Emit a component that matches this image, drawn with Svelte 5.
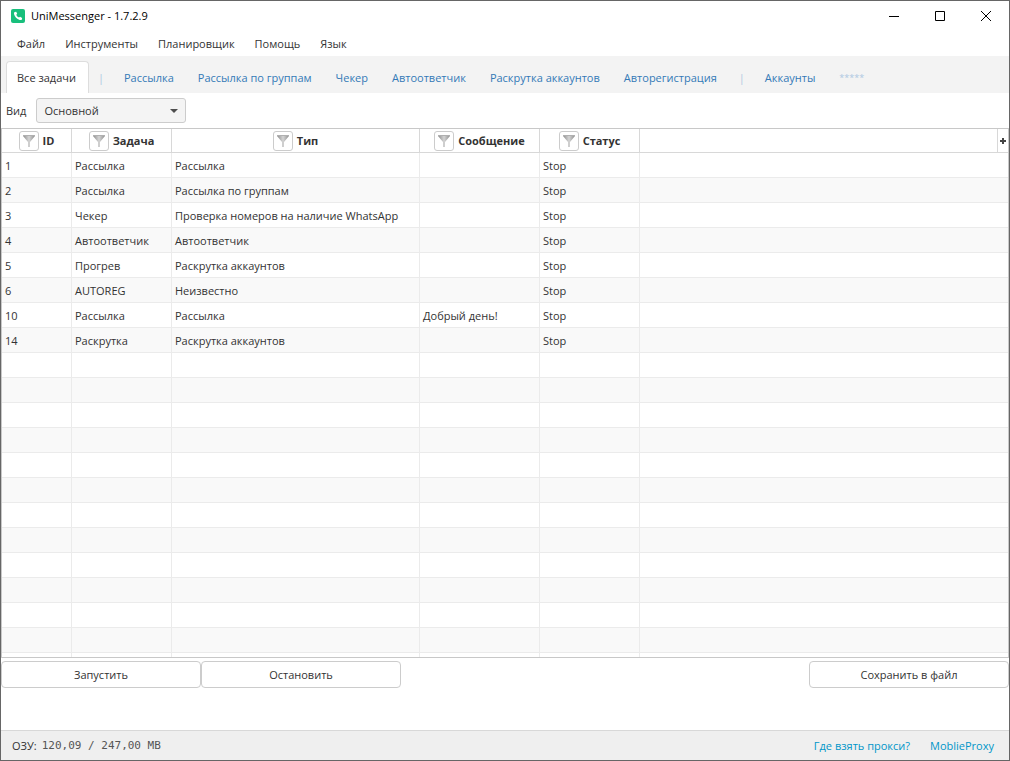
<script lang="ts">
  type Task = { id: number; name: string; type: string; message: string; status: string };

  const menu = ['Файл', 'Инструменты', 'Планировщик', 'Помощь', 'Язык'];

  const tabs = [
    'Все задачи',
    '|',
    'Рассылка',
    'Рассылка по группам',
    'Чекер',
    'Автоответчик',
    'Раскрутка аккаунтов',
    'Авторегистрация',
    '|',
    'Аккаунты',
    '*****',
  ];

  const columns = ['ID', 'Задача', 'Тип', 'Сообщение', 'Статус'];

  const tasks: Task[] = [
    { id: 1, name: 'Рассылка', type: 'Рассылка', message: '', status: 'Stop' },
    { id: 2, name: 'Рассылка', type: 'Рассылка по группам', message: '', status: 'Stop' },
    { id: 3, name: 'Чекер', type: 'Проверка номеров на наличие WhatsApp', message: '', status: 'Stop' },
    { id: 4, name: 'Автоответчик', type: 'Автоответчик', message: '', status: 'Stop' },
    { id: 5, name: 'Прогрев', type: 'Раскрутка аккаунтов', message: '', status: 'Stop' },
    { id: 6, name: 'AUTOREG', type: 'Неизвестно', message: '', status: 'Stop' },
    { id: 10, name: 'Рассылка', type: 'Рассылка', message: 'Добрый день!', status: 'Stop' },
    { id: 14, name: 'Раскрутка', type: 'Раскрутка аккаунтов', message: '', status: 'Stop' },
  ];

  let activeTab = 0;
  let view = 'Основной';
  let tableHeight = 0;

  // empty rows fill the rest of the table area
  $: emptyRows = Math.max(0, Math.ceil((tableHeight - 25) / 25) - tasks.length);
</script>

<div class="window">
  <header class="titlebar">
    <svg class="logo" width="14" height="14" viewBox="0 0 14 14">
      <rect width="14" height="14" rx="2" fill="#18bf7c" />
      <path
        d="M3.800 3 5.200 2.800 6.200 4.800 5.300 5.800C5.800 7.100 6.700 8 8 8.600L9.100 7.800 11.100 8.900 11 10.200C10.500 11 9.700 11.200 8.700 10.900C5.800 10 3.800 7.900 3 5C2.900 4.100 3.100 3.400 3.800 3Z"
        fill="#fff"
      />
    </svg>
    <h1>UniMessenger - 1.7.2.9</h1>
    <div class="window-buttons">
      <button type="button" aria-label="Свернуть">
        <svg width="10" height="10" viewBox="0 0 10 10"><path d="M0 5.500H10" /></svg>
      </button>
      <button type="button" aria-label="Развернуть">
        <svg width="10" height="10" viewBox="0 0 10 10"><path d="M.5.5H9.500V9.500H.5Z" /></svg>
      </button>
      <button type="button" aria-label="Закрыть">
        <svg width="10" height="10" viewBox="0 0 10 10"><path d="M0 0 10 10M10 0 0 10" /></svg>
      </button>
    </div>
  </header>

  <nav class="menu">
    {#each menu as item}
      <button type="button">{item}</button>
    {/each}
  </nav>

  <div class="tabs" role="tablist">
    {#each tabs as tab, index}
      <button
        type="button"
        role="tab"
        class="tab"
        class:active={index === activeTab}
        class:divider={tab === '|'}
        class:muted={tab === '*****'}
        aria-selected={index === activeTab}
        disabled={tab === '|' || tab === '*****'}
        on:click={() => (activeTab = index)}
      >
        {tab}
      </button>
    {/each}
  </div>

  <div class="toolbar">
    <label for="view">Вид</label>
    <div class="select">
      <select id="view" bind:value={view}>
        <option>Основной</option>
      </select>
      <svg width="8" height="4" viewBox="0 0 8 4"><path d="M0 0H8L4 4Z" fill="#4d4d4d" /></svg>
    </div>
  </div>

  <div class="table-area" bind:clientHeight={tableHeight}>
    <table>
      <colgroup>
        <col class="col-id" />
        <col class="col-name" />
        <col class="col-type" />
        <col class="col-message" />
        <col class="col-status" />
        <col />
        <col class="col-add" />
      </colgroup>
      <thead>
        <tr>
          {#each columns as column, index}
            <th>
              <div class="head">
                <button type="button" class="filter" aria-label="Фильтр: {column}">
                  <svg width="14" height="14" viewBox="0 0 14 14">
                    <defs>
                      <linearGradient id="funnel-{index}">
                        <stop offset="0" stop-color="#8c8c8c" />
                        <stop offset="0.5" stop-color="#d4d4d4" />
                        <stop offset="1" stop-color="#909090" />
                      </linearGradient>
                    </defs>
                    <path d="M1 1H13V2L8 8V13H6V8L1 2Z" fill="url(#funnel-{index})" />
                    <path d="M1 1.500H13" stroke="#b0b0b0" />
                  </svg>
                </button>
                {column}
              </div>
            </th>
          {/each}
          <th></th>
          <th class="add">
            <button type="button" aria-label="Столбцы">
              <svg width="6" height="6" viewBox="0 0 6 6"><path d="M3 0V6M0 3H6" stroke="#444" stroke-width="2" /></svg>
            </button>
          </th>
        </tr>
      </thead>
      <tbody>
        {#each tasks as task}
          <tr>
            <td>{task.id}</td>
            <td>{task.name}</td>
            <td>{task.type}</td>
            <td>{task.message}</td>
            <td>{task.status}</td>
            <td colspan="2"></td>
          </tr>
        {/each}
        {#each Array(emptyRows) as _}
          <tr>
            <td></td>
            <td></td>
            <td></td>
            <td></td>
            <td></td>
            <td colspan="2"></td>
          </tr>
        {/each}
      </tbody>
    </table>
  </div>

  <div class="actions">
    <button type="button">Запустить</button>
    <button type="button">Остановить</button>
    <button type="button" class="save">Сохранить в файл</button>
  </div>

  <footer>
    <span>ОЗУ:</span>
    <span class="memory">120,09 / 247,00 MB</span>
    <div class="links">
      <a href="#proxy">Где взять прокси?</a>
      <a href="#mobile-proxy">MoblieProxy</a>
    </div>
  </footer>
</div>

<style>
  .window {
    display: flex;
    flex-direction: column;
    box-sizing: border-box;
    height: 100vh;
    border: 1px solid #666;
    background: #fff;
    color: #333;
    font-family: 'Open Sans', 'Noto Sans', sans-serif;
    font-size: 11px;
    line-height: 16px;
  }

  button,
  select {
    margin: 0;
    padding: 0;
    border: none;
    background: none;
    color: inherit;
    font: inherit;
  }

  .titlebar {
    display: flex;
    align-items: center;
    height: 29px;
    padding-left: 10px;
    color: #000;
  }

  h1 {
    margin: 0 0 0 6px;
    font-size: 11px;
    font-weight: normal;
  }

  .window-buttons {
    display: flex;
    margin-left: auto;
  }

  .window-buttons button {
    display: flex;
    align-items: center;
    justify-content: center;
    width: 46px;
    height: 29px;
  }

  .window-buttons path {
    fill: none;
    stroke: #000;
  }

  .menu {
    display: flex;
    gap: 20px;
    height: 26px;
    padding-left: 16px;
  }

  .menu button {
    padding-top: 2px;
  }

  .tabs {
    display: flex;
    height: 32px;
    padding: 5px 5px 0;
    background: #f3f3f3;
  }

  .tab {
    padding: 0 12px 0 10px;
    border: 1px solid transparent;
    border-bottom: none;
    border-radius: 4px 4px 0 0;
    color: #337ab7;
    white-space: nowrap;
  }

  .tab.active {
    border-color: #ddd;
    background: #fff;
    color: #333;
  }

  .tab.divider,
  .tab.muted {
    color: #adc8e2;
  }

  .tab.divider {
    padding: 0 8px;
  }

  .tab.muted {
    font-size: 9px;
  }

  .toolbar {
    display: flex;
    align-items: center;
    gap: 10px;
    height: 35px;
    padding-left: 5px;
  }

  .select {
    position: relative;
  }

  select {
    display: block;
    box-sizing: border-box;
    width: 150px;
    height: 25px;
    padding: 0 24px 0 7px;
    border: 1px solid #ccc;
    border-radius: 3px;
    background: #f4f4f4;
    appearance: none;
  }

  .select svg {
    position: absolute;
    top: 11px;
    right: 8px;
    pointer-events: none;
  }

  .table-area {
    flex: 1;
    min-height: 0;
    overflow: hidden;
    border: 1px solid #c8c8c8;
  }

  table {
    width: 100%;
    border-collapse: separate;
    border-spacing: 0;
    table-layout: fixed;
  }

  .col-id {
    width: 70px;
  }

  .col-name,
  .col-status {
    width: 100px;
  }

  .col-type {
    width: 248px;
  }

  .col-message {
    width: 120px;
  }

  .col-add {
    width: 10px;
  }

  th,
  td {
    box-sizing: border-box;
    padding: 2px 0 0 3px;
    border-right: 1px solid #ebebeb;
    border-bottom: 1px solid #ebebeb;
    text-align: left;
    white-space: nowrap;
  }

  th {
    height: 24px;
    padding: 0;
    border-color: #d8d8d8;
  }

  td {
    height: 25px;
  }

  th:last-child,
  td:last-child {
    border-right: none;
  }

  tbody tr:nth-child(even) {
    background: #f9f9f9;
  }

  .head {
    display: flex;
    align-items: center;
    justify-content: center;
    gap: 4px;
  }

  .filter {
    display: flex;
    align-items: center;
    justify-content: center;
    box-sizing: border-box;
    width: 20px;
    height: 20px;
    border: 1px solid #ccc;
    border-radius: 3px;
  }

  .add button {
    display: flex;
    justify-content: center;
    width: 100%;
  }

  .actions {
    display: flex;
    height: 69px;
    padding-top: 3px;
  }

  .actions button {
    box-sizing: border-box;
    width: 200px;
    height: 27px;
    border: 1px solid #ccc;
    border-radius: 4px;
  }

  .actions .save {
    margin-left: auto;
  }

  footer {
    display: flex;
    align-items: center;
    gap: 5px;
    height: 29px;
    padding: 0 15px 0 11px;
    border-top: 1px solid #d8d8d8;
    background: #efefef;
  }

  .memory {
    color: #555;
    font-family: 'DejaVu Sans Mono', monospace;
    font-size: 11px;
  }

  .links {
    display: flex;
    gap: 20px;
    margin-left: auto;
  }

  a {
    color: #0096c9;
    text-decoration: none;
  }
</style>
